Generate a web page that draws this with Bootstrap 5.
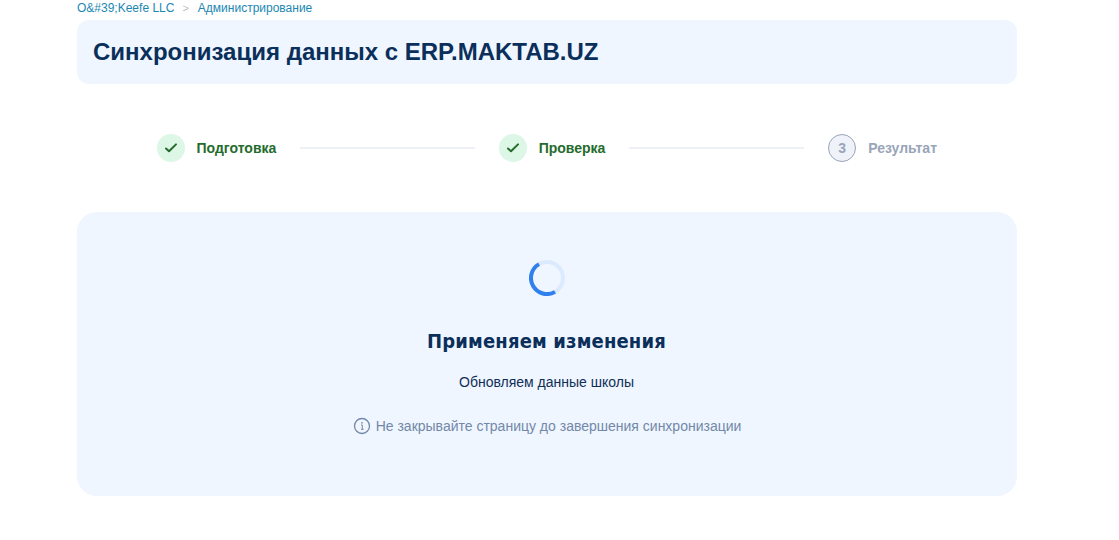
<!DOCTYPE html>
<html lang="ru">
<head>
<meta charset="utf-8">
<meta name="viewport" content="width=device-width, initial-scale=1">
<title>Синхронизация данных</title>
<link href="https://cdn.jsdelivr.net/npm/bootstrap@5.3.0/dist/css/bootstrap.min.css" rel="stylesheet">
<style>
body { font-family: "Liberation Sans", Arial, sans-serif; font-size: 14px; line-height: 20px; color: #0f2f57; background: #fff; overflow: hidden; }
.page { width: 940px; margin-left: 77px; }
.crumbs { height: 20px; font-size: 12px; line-height: 16px; }
.crumbs a { color: #1b87b3; }
.crumbs .sep { color: #b9bec5; font-size: 11px; margin: 0 9px 0 8px; }
.panel { background: #eff6ff; }
.title-panel { height: 64px; border-radius: 12px; }
.title-panel h1 { font-size: 24px; line-height: 32px; color: #0b2f5b; }
.steps { height: 28px; margin: 50px 80px; gap: 24px; }
.step { gap: 12px; color: #246b2c; white-space: nowrap; }
.step-name { margin-left: -.5px; }
.step-dot { width: 28px; height: 28px; background: #dcf7e6; }
.step-wait { color: #98a5b8; }
.step-wait .step-name { margin-left: 0; }
.step-wait .step-dot { background: #eff3f9; border: 1px solid #98a5b8; }
.step-line { height: 2px; background: #edf1f6; }
.progress-panel { height: 284px; border-radius: 20px; padding-top: 48px; }
.progress-panel h2 { font-family: "DejaVu Sans Condensed", Tahoma, sans-serif; font-size: 20px; line-height: 28px; letter-spacing: .16px; margin: 31px 0 0; padding-right: 1px; color: #0b2f5b; }
.status { margin-top: 17px; padding-right: 1px; }
.hint { margin-top: 24px; gap: 5px; color: #7388a8; }
</style>
</head>
<body>
<main class="page">
  <nav class="crumbs d-flex" aria-label="Навигация">
    <a class="text-decoration-none" href="#">O&amp;#39;Keefe LLC</a><span class="sep">&gt;</span><a class="text-decoration-none" href="#">Администрирование</a>
  </nav>
  <header class="panel title-panel p-3">
    <h1 class="fw-bold mb-0">Синхронизация данных с ERP.MAKTAB.UZ</h1>
  </header>
  <div class="steps d-flex align-items-center fw-bold">
    <div class="step d-flex align-items-center">
      <span class="step-dot rounded-circle d-flex align-items-center justify-content-center"><svg width="14" height="14" viewBox="0 0 14 14" fill="none" stroke="currentColor" stroke-width="2" stroke-linecap="round" stroke-linejoin="round"><path d="M2 7.5 5 10.3 12 3.4"/></svg></span>
      <span class="step-name">Подготовка</span>
    </div>
    <div class="step-line flex-fill"></div>
    <div class="step d-flex align-items-center">
      <span class="step-dot rounded-circle d-flex align-items-center justify-content-center"><svg width="14" height="14" viewBox="0 0 14 14" fill="none" stroke="currentColor" stroke-width="2" stroke-linecap="round" stroke-linejoin="round"><path d="M2 7.5 5 10.3 12 3.4"/></svg></span>
      <span class="step-name">Проверка</span>
    </div>
    <div class="step-line flex-fill"></div>
    <div class="step step-wait d-flex align-items-center">
      <span class="step-dot rounded-circle d-flex align-items-center justify-content-center">3</span>
      <span class="step-name">Результат</span>
    </div>
  </div>
  <section class="panel progress-panel d-flex flex-column align-items-center">
    <svg class="flex-shrink-0" width="36" height="36" viewBox="0 0 36 36" fill="none" stroke-width="4"><circle cx="18" cy="18" r="16" stroke="#dbeafe"/><path d="M26 31.86A16 16 0 1 1 10 4.14" stroke="#2f80ed"/></svg>
    <h2 class="fw-bold">Применяем изменения</h2>
    <div class="status">Обновляем данные школы</div>
    <div class="hint d-flex align-items-center">
      <svg width="18" height="18" viewBox="0 0 18 18" fill="none" stroke="currentColor" stroke-width="1.3"><circle cx="9" cy="9" r="7.5"/><path stroke-width="1" d="M8 8H9.3V12.3M8 12.3H10.6"/><circle cx="9" cy="5.8" r=".85" fill="currentColor" stroke="none"/></svg>
      <span>Не закрывайте страницу до завершения синхронизации</span>
    </div>
  </section>
</main>
<script src="https://cdn.jsdelivr.net/npm/bootstrap@5.3.0/dist/js/bootstrap.bundle.min.js"></script>
</body>
</html>
